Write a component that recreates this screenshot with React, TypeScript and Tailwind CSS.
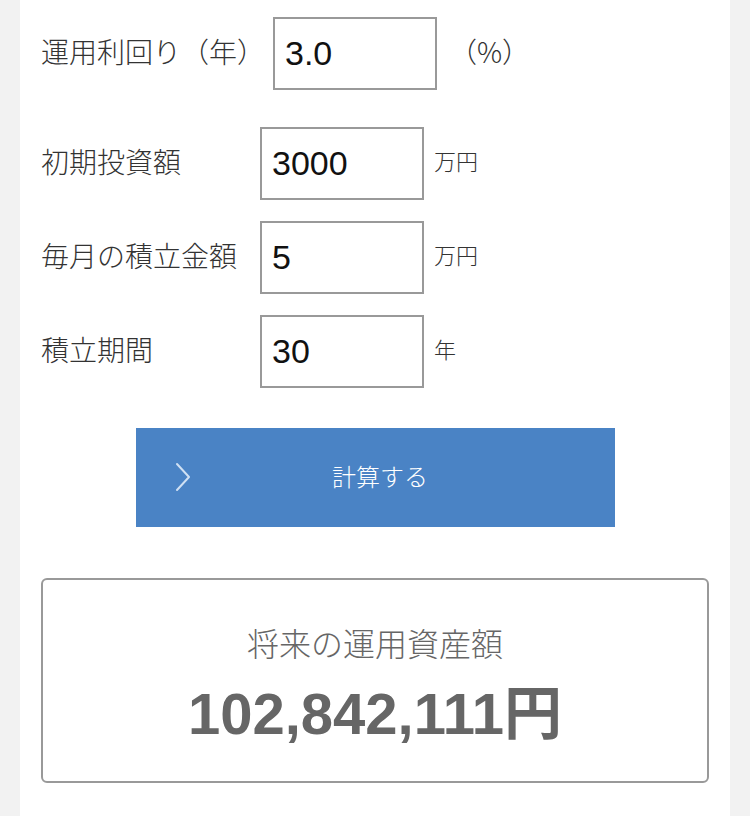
const jp = "font-['Noto_Sans_CJK_JP',sans-serif]";
const num = "font-['Liberation_Sans','Noto_Sans_CJK_JP',sans-serif]";

const rows = [
  { label: "初期投資額", value: "3000", unit: "万円" },
  { label: "毎月の積立金額", value: "5", unit: "万円" },
  { label: "積立期間", value: "30", unit: "年" },
];

function Field({ value }: { value: string }) {
  return (
    <input
      type="text"
      readOnly
      value={value}
      className={`${num} h-[73px] w-[164px] border-2 border-[#999] bg-white pl-[10px] text-[34px] text-[#111] outline-none`}
    />
  );
}

export default function App() {
  return (
    <div className="min-h-[816px] bg-[#f2f2f2]">
      <div className={`${jp} mx-[20px] min-h-[816px] bg-white px-[21px] pt-[17px] font-light`}>
        <div className="flex items-center">
          <span className="w-[232px] pb-[6px] text-[28px] text-[#333]">
            運用利回り（年）
          </span>
          <Field value="3.0" />
          <span className="ml-[12px] pb-[6px] text-[28px] text-[#333]">（%）</span>
        </div>

        <div className="mt-[37px] flex flex-col gap-[21px]">
          {rows.map((r) => (
            <div key={r.label} className="flex items-center">
              <span className="w-[219px] pb-[6px] text-[28px] text-[#333]">
                {r.label}
              </span>
              <Field value={r.value} />
              <span className="ml-[10px] pb-[6px] text-[22px] text-[#333]">
                {r.unit}
              </span>
            </div>
          ))}
        </div>

        <button className="relative mx-auto mt-[40px] flex h-[99px] w-[479px] items-center justify-center bg-[#4a83c5] pb-[4px] pl-[10px] text-[24px] text-white">
          <svg
            className="absolute left-[38px] top-[34px]"
            width="18"
            height="30"
            viewBox="0 0 18 30"
            fill="none"
          >
            <polyline
              points="3,2 15,15 3,28"
              stroke="#cfe0f3"
              strokeWidth="2"
              strokeLinecap="round"
              strokeLinejoin="round"
            />
          </svg>
          計算する
        </button>

        <div className="mt-[51px] flex h-[205px] flex-col items-center rounded-[6px] border-2 border-[#999] pt-[42px]">
          <p className="text-[32px] leading-[40px] text-[#666]">将来の運用資産額</p>
          <p className={`${num} mt-[20px] text-[58px] font-bold leading-[64px] text-[#666]`}>
            102,842,111円
          </p>
        </div>
      </div>
    </div>
  );
}
